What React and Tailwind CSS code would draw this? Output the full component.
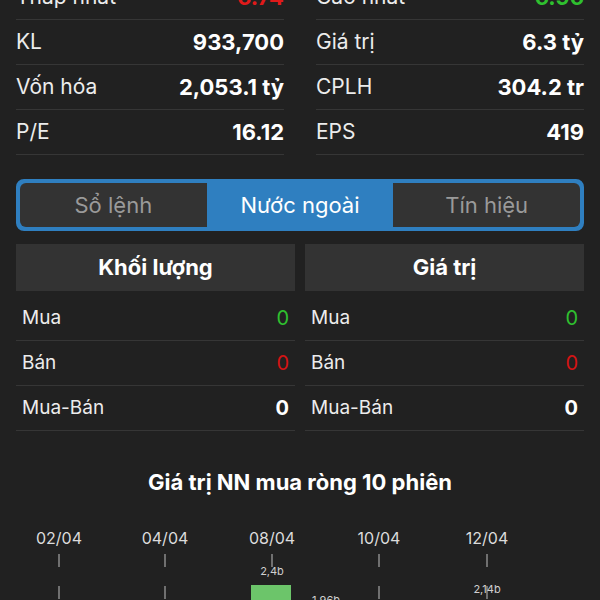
const stats = [
  [
    { label: "Thấp nhất", value: "6.74", color: "text-[#e01a1a]" },
    { label: "KL", value: "933,700" },
    { label: "Vốn hóa", value: "2,053.1 tỷ" },
    { label: "P/E", value: "16.12" },
  ],
  [
    { label: "Cao nhất", value: "6.96", color: "text-[#2fc02f]" },
    { label: "Giá trị", value: "6.3 tỷ" },
    { label: "CPLH", value: "304.2 tr" },
    { label: "EPS", value: "419" },
  ],
];

const flows = [
  { label: "Mua", value: "0", color: "text-[#2fc02f] font-normal" },
  { label: "Bán", value: "0", color: "text-[#d41414] font-normal" },
  { label: "Mua-Bán", value: "0", color: "text-white font-bold" },
];

const ticks = [
  { x: 59, label: "02/04" },
  { x: 165, label: "04/04" },
  { x: 272, label: "08/04" },
  { x: 379, label: "10/04" },
  { x: 487, label: "12/04" },
];

function StatColumn({ rows }) {
  return (
    <div className="flex-1">
      {rows.map((r) => (
        <div key={r.label} className="flex h-[45px] items-center justify-between border-b border-[#363636]">
          <span className="text-[21px] text-[#ececec]">{r.label}</span>
          <span className={`text-[22px] font-bold ${r.color || "text-white"}`}>{r.value}</span>
        </div>
      ))}
    </div>
  );
}

function FlowColumn({ title }) {
  return (
    <div className="flex-1">
      <div className="flex h-[47px] items-center justify-center bg-[#333333]">
        <span className="text-[22px] font-bold text-white">{title}</span>
      </div>
      <div className="mt-[5px]">
        {flows.map((f) => (
          <div key={f.label} className="flex h-[45px] items-center justify-between border-b border-[#363636] px-[6px]">
            <span className="text-[19px] text-[#ececec]">{f.label}</span>
            <span className={`text-[20px] ${f.color}`}>{f.value}</span>
          </div>
        ))}
      </div>
    </div>
  );
}

function NetChart() {
  return (
    <svg width="600" height="90" viewBox="0 510 600 90" className="block">
      {ticks.map((t) => (
        <g key={t.label}>
          <text x={t.x} y="543" textAnchor="middle" fontSize="16" fill="#dcdcdc" fontFamily="Inter, sans-serif">
            {t.label}
          </text>
          <line x1={t.x} y1="553" x2={t.x} y2="600" stroke="#8a8a8a" strokeWidth="1.5" strokeDasharray="13 19" />
        </g>
      ))}
      <rect x="251" y="584" width="40" height="20" fill="#6cc56a" />
      <text x="272" y="574" textAnchor="middle" fontSize="11" fill="#d0d0d0" fontFamily="Inter, sans-serif">2,4b</text>
      <text x="326" y="603" textAnchor="middle" fontSize="11" fill="#d0d0d0" fontFamily="Inter, sans-serif">1,96b</text>
      <text x="487" y="592" textAnchor="middle" fontSize="11" fill="#d0d0d0" fontFamily="Inter, sans-serif">2,14b</text>
    </svg>
  );
}

export default function App() {
  return (
    <div className="h-[600px] w-[600px] overflow-hidden bg-[#212121] font-['Inter',sans-serif]">
      <div className="-mt-[25px] flex gap-[32px] px-4">
        <StatColumn rows={stats[0]} />
        <StatColumn rows={stats[1]} />
      </div>

      <div className="mx-4 mt-[24px] flex h-[52px] overflow-hidden rounded-lg border-2 border-[#2f7fc0] bg-[#2f7fc0]">
        <div className="m-[2px] mr-0 flex flex-1 items-center justify-center rounded-l-md bg-[#333333] text-[22px] text-[#9a9a9a]">Sổ lệnh</div>
        <div className="flex flex-1 items-center justify-center text-[22px] text-white">Nước ngoài</div>
        <div className="m-[2px] ml-0 flex flex-1 items-center justify-center rounded-r-md bg-[#333333] text-[22px] text-[#9a9a9a]">Tín hiệu</div>
      </div>

      <div className="mx-4 mt-[13px] flex gap-[10px]">
        <FlowColumn title="Khối lượng" />
        <FlowColumn title="Giá trị" />
      </div>

      <div className="mt-[35px] text-center text-[22px] font-bold text-white">Giá trị NN mua ròng 10 phiên</div>

      <div className="mt-[12px]">
        <NetChart />
      </div>
    </div>
  );
}
